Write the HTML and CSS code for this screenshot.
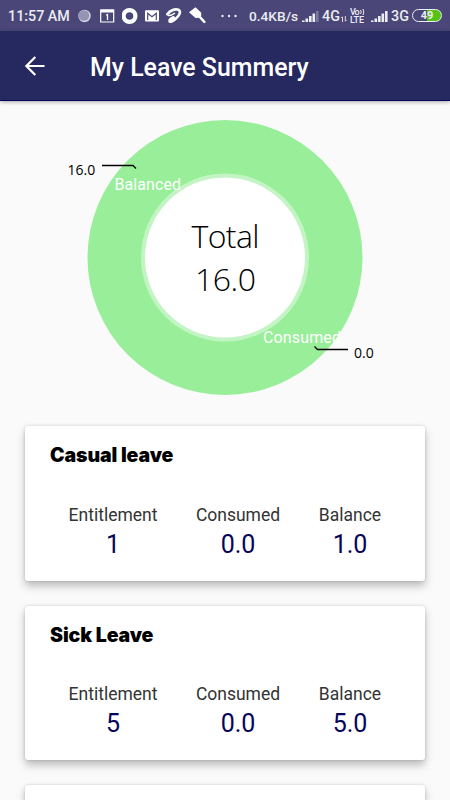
FILE: index.html
```html
<!DOCTYPE html>
<html lang="en">
<head>
  <meta charset="UTF-8" />
  <meta name="viewport" content="width=device-width, initial-scale=1.0"/>
  <title>My Leave Summery</title>
  <link rel="stylesheet" href="styles.css">
</head>
<body>
  <div class="status">
    <span class="time">11:57 AM</span>
    <div class="notices">
      <svg width="15" height="16" viewBox="0 0 15 16"><circle cx="6.5" cy="8" r="6.2" fill="#d5d4e2"/><circle cx="6" cy="7.5" r="5.3" fill="#9694b4"/></svg>
      <svg width="15" height="16" viewBox="0 0 15 16"><path d="M.7 2h13v12H.7z" fill="none" stroke="#fff" stroke-width="1.2"/><path d="M.5 1.5h13.5v3H.5z" fill="#fff"/><path d="M6 7.3l1.5-.8V12" fill="none" stroke="#fff" stroke-width="1.3"/></svg>
      <svg width="16" height="16" viewBox="0 0 16 16"><circle cx="7.5" cy="8" r="5.9" fill="none" stroke="#fff" stroke-width="4.2"/></svg>
      <svg width="14" height="16" viewBox="0 0 14 16"><rect y="2.2" width="14" height="11.3" rx="1" fill="#fff"/><path d="M2.7 12V5.2L7 8.7l4.3-3.5V12" fill="none" stroke="#4a4778" stroke-width="1.2"/></svg>
      <svg width="16" height="16" viewBox="0 0 16 16"><path d="M1.3 6.3C4 2.5 8.500 .9 11.5 1.5C15.5 2.5 14 7 10.5 10C7 13.5 3.500 14.800 3.500 13C3.500 11.500 6 10 7.500 9.300" fill="none" stroke="#fff" stroke-width="2.6" stroke-linecap="round"/><path d="M2 7.500C4 8 7 6.500 9 5" fill="none" stroke="#fff" stroke-width="1.500"/></svg>
      <svg width="17" height="17" viewBox="0 0 17 17"><path d="M6.5 .3L12 5.5l.4 3-2.400 2.300-3.500.3L0 5.3z" fill="#fff"/><path d="M9.5 8.5l5.8 6.400" stroke="#fff" stroke-width="2.500" stroke-linecap="round"/></svg>
    </div>
    <svg class="dots" width="16" height="4" viewBox="0 0 16 4"><circle cx="1.5" cy="2" r="1.2"/><circle cx="8" cy="2" r="1.2"/><circle cx="14.5" cy="2" r="1.2"/></svg>
    <span class="speed">0.4KB/s</span>
    <svg class="signal" width="18" height="14" viewBox="0 0 18 14"><path d="M1 11.5h2.6V13H1zM4.5 9.5h2.6V13H4.5zM8 7h2.6v6H8zM11.5 4.5h2.6V13h-2.6z"/><path d="M15 2h2.600v11H15z" opacity=".3"/></svg>
    <span class="net">4G</span>
    <svg class="arrows" width="6" height="6" viewBox="0 0 6 6"><path d="M1.5 6V1M.3 2l1.2-1.3M4.3 0v5M5.6 4L4.3 5.3" fill="none" stroke="#eee" stroke-width=".9"/></svg>
    <svg class="volte" width="15" height="16" viewBox="0 0 15 16">
      <text y="7" textLength="9.500">Vo</text>
      <path d="M10.500 2q1.500 2 0 4M13 1q1.500 3 0 6" fill="none" stroke="#ececf2"/>
      <text y="15" textLength="14">LTE</text>
    </svg>
    <svg class="signal second" width="18" height="14" viewBox="0 0 18 14"><path d="M1 11.5h2.6V13H1zM4.5 9.5h2.6V13H4.5zM8 7h2.6v6H8zM11.5 4.5h2.6V13h-2.6zM15 2h2.6v11H15z"/></svg>
    <span class="net">3G</span>
    <span class="battery">49</span>
  </div>

  <header class="appbar">
    <svg width="20" height="20" viewBox="0 0 20 20"><path d="M19.5 10H1.5M10.3 1L1.4 10l8.900 9" fill="none" stroke="#fff" stroke-width="2.2"/></svg>
    <h1>My Leave Summery</h1>
  </header>

  <main>
    <svg class="chart" width="450" height="300" viewBox="0 100 450 300">
      <circle cx="225" cy="257.5" r="137.5" fill="#98ee99"/>
      <circle cx="225" cy="257.5" r="84" fill="#c3f5c4"/>
      <circle cx="225" cy="257.5" r="80" fill="#fff"/>
      <g class="total">
        <text x="225.5" y="248" textLength="68">Total</text>
        <text x="225.5" y="290.5" textLength="61">16.0</text>
      </g>
      <g class="slice">
        <text x="114.5" y="189.5" textLength="66.5">Balanced</text>
        <text x="263" y="343" textLength="78">Consumed</text>
      </g>
      <path d="M102 165.500h31l3 3M314.500 346.500l3 3H348" fill="none" stroke="#000" stroke-width="1.3"/>
      <g class="value">
        <text x="67.500" y="174.5">16.0</text>
        <text x="354" y="358">0.0</text>
      </g>
    </svg>

    <section class="card">
      <h2>Casual leave</h2>
      <div class="row">
        <div class="col"><span>Entitlement</span><strong>1</strong></div>
        <div class="col"><span>Consumed</span><strong>0.0</strong></div>
        <div class="col"><span>Balance</span><strong>1.0</strong></div>
      </div>
    </section>

    <section class="card">
      <h2>Sick Leave</h2>
      <div class="row">
        <div class="col"><span>Entitlement</span><strong>5</strong></div>
        <div class="col"><span>Consumed</span><strong>0.0</strong></div>
        <div class="col"><span>Balance</span><strong>5.0</strong></div>
      </div>
    </section>

    <section class="card last"></section>
  </main>
</body>
</html>
```
FILE: styles.css
```css
* {
  box-sizing: border-box;
}

body {
  margin: 0;
  height: 800px;
  overflow: hidden;
  display: flex;
  flex-direction: column;
  background: #fafafa;
  font-family: Roboto, sans-serif;
}

svg {
  display: block;
  flex: none;
}

.status {
  flex: none;
  height: 31px;
  display: flex;
  align-items: center;
  background: #4a4778;
  color: #ececf2;
  white-space: nowrap;
}

.time {
  width: 70px;
  margin-left: 8px;
  font-size: 14.3px;
  font-weight: 500;
}

.notices {
  display: flex;
  align-items: center;
  gap: 7px;
  width: 143px;
}

.dots {
  fill: #ececf2;
}

.speed {
  width: 52px;
  margin-left: 12px;
  font-size: 13.7px;
  font-weight: 500;
}

.signal {
  fill: #ececf2;
}

.net {
  width: 19px;
  margin-left: 3px;
  font-size: 14.3px;
  font-weight: 500;
}

.arrows {
  margin-top: 6px;
}

.volte {
  margin-left: 3px;
  font-size: 9px;
  font-weight: 500;
  fill: #ececf2;
}

.second {
  margin-left: 5px;
}

.battery {
  width: 30px;
  height: 13px;
  margin-left: 2px;
  border: 1.5px solid #ececf2;
  border-radius: 7px;
  background: linear-gradient(90deg, #55c316 0 0) 14px 0 / 14px 100% no-repeat;
  font-size: 11px;
  font-weight: 700;
  line-height: 11.5px;
  text-align: center;
}

.appbar {
  flex: none;
  height: 70px;
  padding: 1px 0 0 25px;
  display: flex;
  align-items: center;
  gap: 45px;
  background: #262860;
  border-bottom: 1px solid #07045a;
  box-shadow: 0 1px 4px rgba(0, 0, 0, 0.35);
}

h1 {
  margin: 3px 0 0;
  color: #fff;
  font-size: 24.9px;
  font-weight: 500;
}

main {
  flex: 1;
  min-height: 0;
  display: flex;
  flex-direction: column;
}

.chart {
  margin-top: -1px;
}

.total {
  font: 300 32px "Open Sans", sans-serif;
  text-anchor: middle;
}

.slice {
  font-size: 16px;
  fill: #fff;
}

.value {
  font: 14px "Open Sans", sans-serif;
}

.card {
  flex: none;
  height: 154.5px;
  margin: 0 25px 25px;
  padding: 17px 25px 0;
  border-radius: 3px;
  background: #fff;
  box-shadow: 0 5px 8px rgba(0, 0, 0, 0.25), 0 0 3px rgba(0, 0, 0, 0.16);
}

.chart + .card {
  margin-top: 26px;
}

.last {
  flex: 1;
  height: auto;
  margin-bottom: 0;
  padding: 0;
  border-radius: 3px 3px 0 0;
}

h2 {
  margin: 0;
  font-family: Inter, sans-serif;
  font-size: 19.5px;
  font-weight: 900;
  line-height: 24px;
  letter-spacing: -0.1px;
}

.row {
  display: grid;
  grid-template-columns: 126px 124px 100px;
  margin-top: 35.5px;
}

.col {
  display: flex;
  flex-direction: column;
  align-items: center;
}

.col span {
  color: #333;
  font-size: 17.5px;
  line-height: 25px;
}

.col strong {
  color: #07045a;
  font-size: 25px;
  font-weight: 400;
  line-height: 34px;
}
```
